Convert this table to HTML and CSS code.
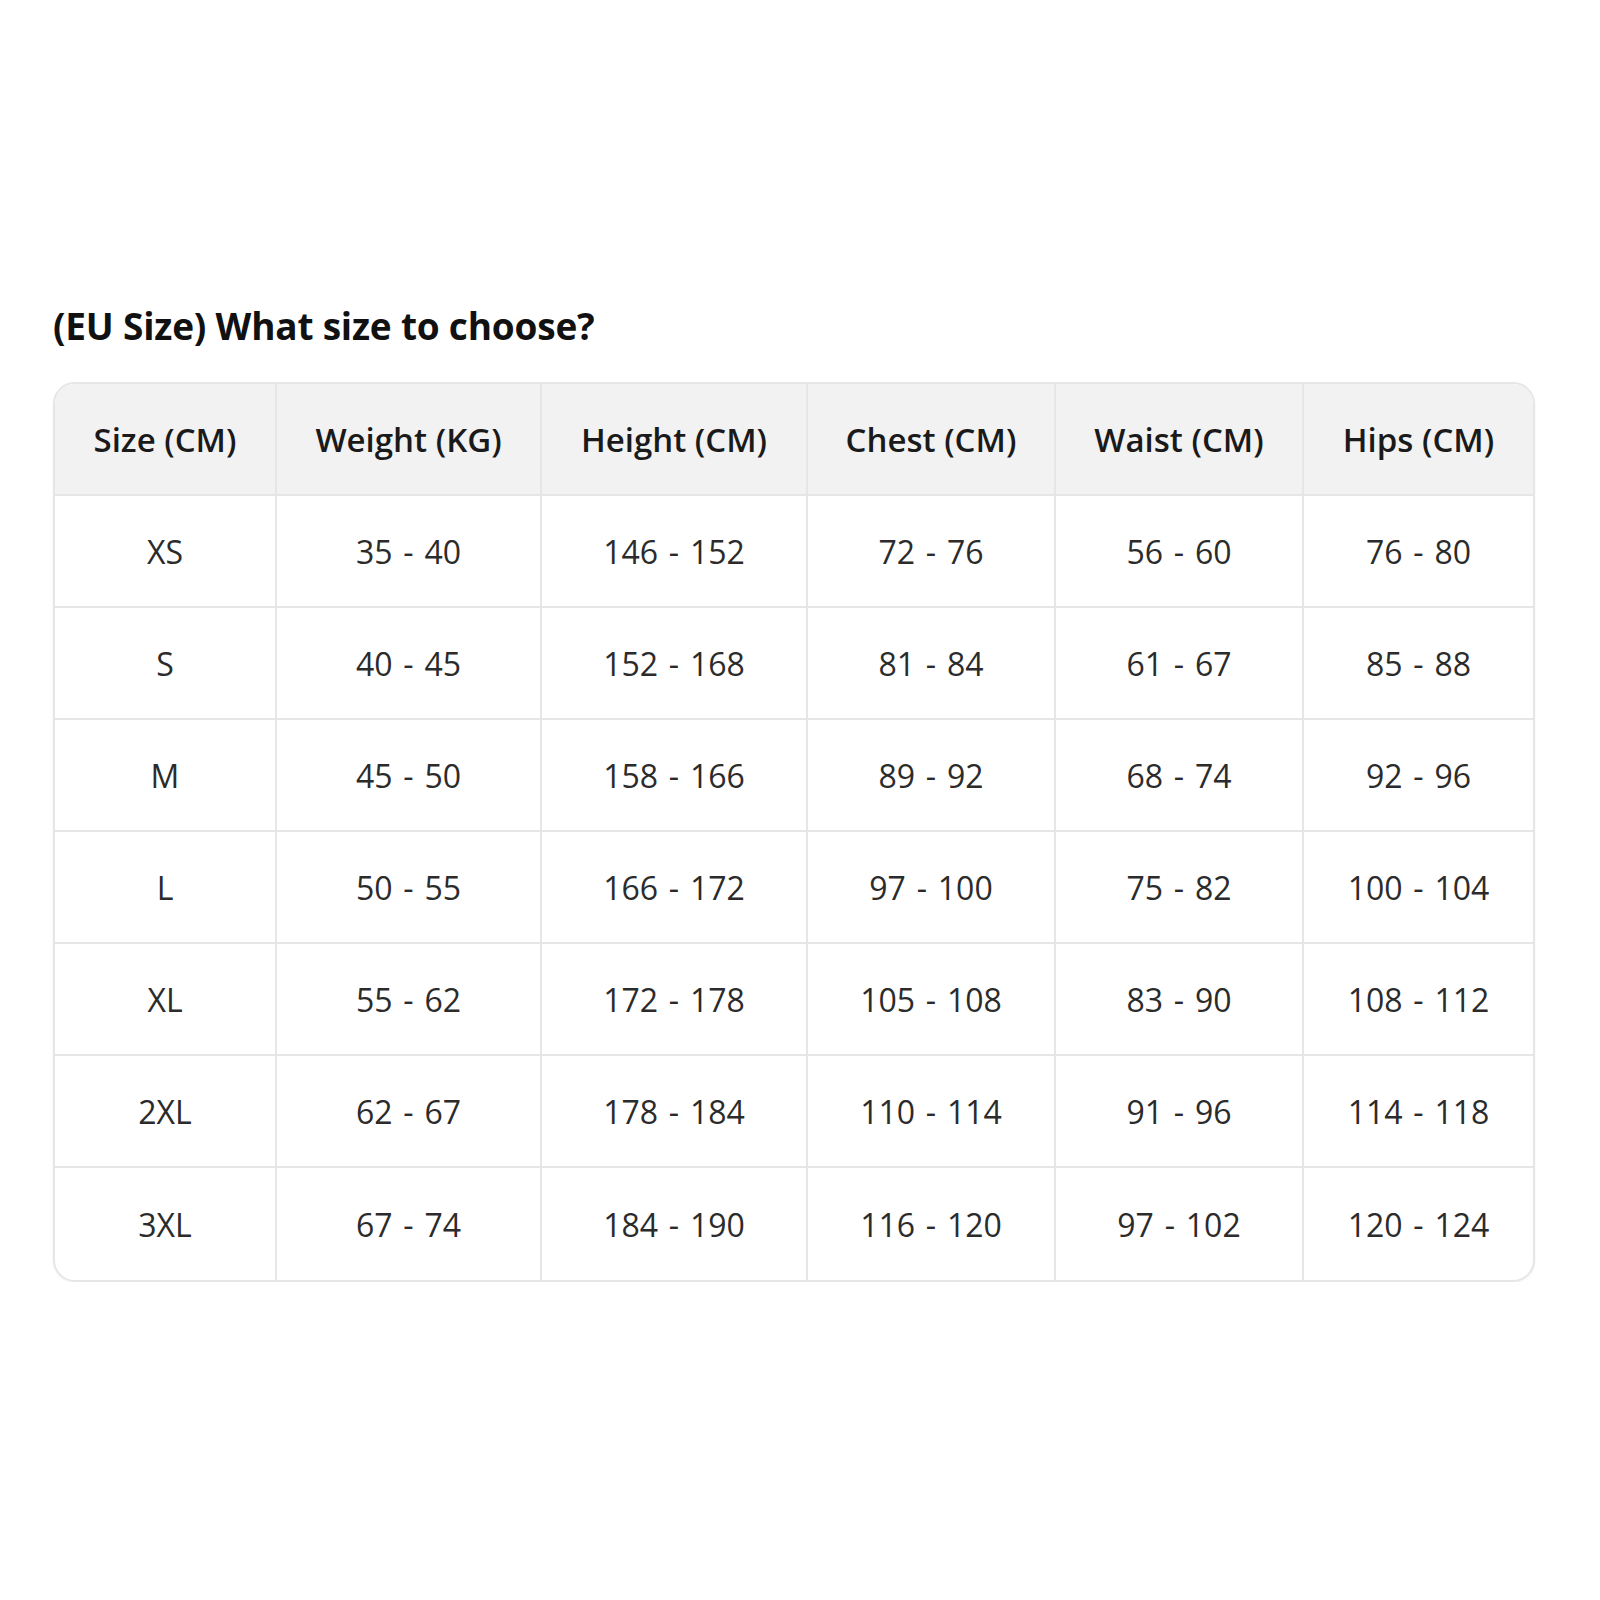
FILE: index.html
```html
<!DOCTYPE html>
<html>
<head>
<meta charset="utf-8">
<link rel="stylesheet" href="styles.css">
</head>
<body>
<main class="page">
  <h2 class="title">(EU Size) What size to choose?</h2>
  <div class="table-wrap">
    <table class="size-table">
      <colgroup>
        <col class="c1"><col class="c2"><col class="c3"><col class="c4"><col class="c5"><col class="c6">
      </colgroup>
      <thead>
        <tr><th>Size (CM)</th><th>Weight (KG)</th><th>Height (CM)</th><th>Chest (CM)</th><th>Waist (CM)</th><th>Hips (CM)</th></tr>
      </thead>
      <tbody>
        <tr><td>XS</td><td>35 - 40</td><td>146 - 152</td><td>72 - 76</td><td>56 - 60</td><td>76 - 80</td></tr>
        <tr><td>S</td><td>40 - 45</td><td>152 - 168</td><td>81 - 84</td><td>61 - 67</td><td>85 - 88</td></tr>
        <tr><td>M</td><td>45 - 50</td><td>158 - 166</td><td>89 - 92</td><td>68 - 74</td><td>92 - 96</td></tr>
        <tr><td>L</td><td>50 - 55</td><td>166 - 172</td><td>97 - 100</td><td>75 - 82</td><td>100 - 104</td></tr>
        <tr><td>XL</td><td>55 - 62</td><td>172 - 178</td><td>105 - 108</td><td>83 - 90</td><td>108 - 112</td></tr>
        <tr><td>2XL</td><td>62 - 67</td><td>178 - 184</td><td>110 - 114</td><td>91 - 96</td><td>114 - 118</td></tr>
        <tr><td>3XL</td><td>67 - 74</td><td>184 - 190</td><td>116 - 120</td><td>97 - 102</td><td>120 - 124</td></tr>
      </tbody>
    </table>
  </div>
</main>
</body>
</html>
```
FILE: styles.css
```css
html, body {
  margin: 0;
  padding: 0;
  background: #ffffff;
}
.page {
  padding: 302px 65px 0 53px;
  font-family: "Open Sans", "Noto Sans", sans-serif;
}
.title {
  margin: 0 0 32px 0;
  font-size: 37px;
  font-weight: 700;
  line-height: 48px;
  color: #111111;
  letter-spacing: -0.2px;
}
.table-wrap {
  width: 1482px;
  border: 2px solid #e6e6e6;
  border-radius: 22px;
  overflow: hidden;
  box-sizing: border-box;
  box-shadow: 0 1px 3px rgba(0,0,0,0.05);
}
.size-table {
  width: 100%;
  border-collapse: separate;
  border-spacing: 0;
  table-layout: fixed;
}
.c1 { width: 222px; }
.c2 { width: 265px; }
.c3 { width: 266px; }
.c4 { width: 248px; }
.c5 { width: 248px; }
.c6 { width: auto; }
.size-table tr {
  height: 112px;
}
.size-table th,
.size-table td {
  padding: 0;
  text-align: center;
  vertical-align: middle;
  border-right: 2px solid #e6e6e6;
  border-bottom: 2px solid #e6e6e6;
}
.size-table th:last-child,
.size-table td:last-child {
  border-right: none;
}
.size-table tbody tr:last-child td {
  border-bottom: none;
}
.size-table th {
  background: #f2f2f2;
  font-size: 33px;
  font-weight: 600;
  color: #1a1a1a;
}
.size-table td {
  font-size: 32px;
  font-weight: 400;
  color: #2b2b2b;
  word-spacing: 2.5px;
}
```
